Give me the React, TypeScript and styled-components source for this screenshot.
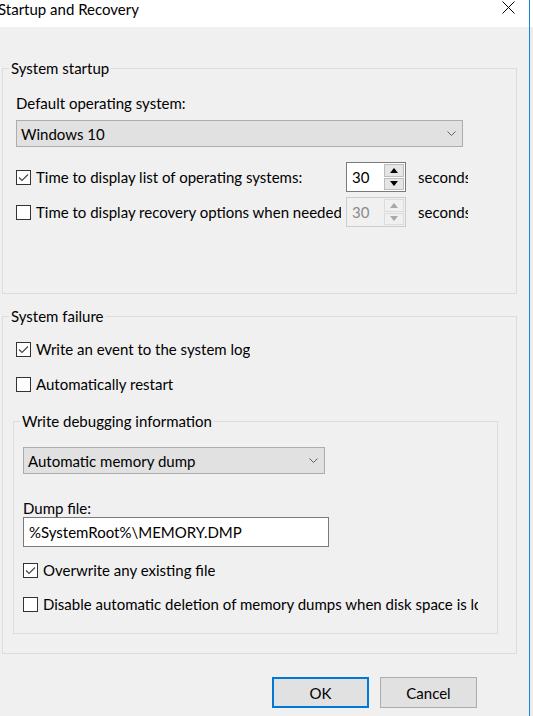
import React from "react";
import styled, { createGlobalStyle } from "styled-components";

const GlobalStyle = createGlobalStyle`
  html, body {
    margin: 0;
    padding: 0;
  }
  body {
    width: 533px;
    height: 716px;
    overflow: hidden;
    background: linear-gradient(#ffffff 27px, #ececec 27px);
    font-family: Lato, "Noto Sans", sans-serif;
    font-size: 15px;
    color: #000;
  }
`;

const Window = styled.div`
  width: 530px;
  height: 716px;
  box-sizing: border-box;
  border-right: 1px solid #1883d7;
  display: flex;
  flex-direction: column;
  background: #f0f0f0;
`;

const TitleBar = styled.div`
  height: 27px;
  flex-shrink: 0;
  background: #fff;
  display: flex;
  align-items: center;
  justify-content: space-between;
  padding-right: 14px;
`;

const Title = styled.span`
  margin-left: -2px;
  margin-top: -10px;
  font-size: 15px;
`;

const CloseIcon = styled.svg`
  margin-top: -12px;
`;

const Body = styled.div`
  flex: 1;
  padding: 32px 12px 0 2px;
  display: flex;
  flex-direction: column;
`;

const GroupBox = styled.fieldset<{ $width: number; $height: number; $padLeft: number; $padTop: number }>`
  margin: 0;
  box-sizing: border-box;
  width: ${(p) => p.$width}px;
  height: ${(p) => p.$height}px;
  min-inline-size: 0;
  border: 1px solid #dcdcdc;
  padding: ${(p) => p.$padTop}px 0 0 ${(p) => p.$padLeft}px;
  display: flex;
  flex-direction: column;
  align-items: flex-start;
`;

// the legend sits after the fieldset's left padding, so pull it back to 6px from the border
const Legend = styled.legend<{ $padLeft: number }>`
  padding: 0 2px;
  margin-left: ${(p) => 6 - p.$padLeft}px;
  line-height: 18px;
`;

const FieldLabel = styled.div<{ $gap?: number }>`
  line-height: 18px;
  margin-top: ${(p) => p.$gap ?? 0}px;
  white-space: nowrap;
`;

const Combo = styled.div<{ $width: number; $gap: number }>`
  width: ${(p) => p.$width}px;
  height: 27px;
  margin-top: ${(p) => p.$gap}px;
  box-sizing: border-box;
  background: #e1e1e1;
  border: 1px solid #adadad;
  display: flex;
  align-items: center;
  justify-content: space-between;
  padding: 0 6px 0 4px;
`;

const SpinRow = styled.div<{ $gap: number }>`
  display: flex;
  align-items: center;
  margin-top: ${(p) => p.$gap}px;
`;

const CheckRow = styled.div<{ $width?: number; $gap?: number }>`
  display: flex;
  align-items: center;
  gap: 5px;
  height: 18px;
  margin-top: ${(p) => p.$gap ?? 0}px;
  width: ${(p) => (p.$width ? `${p.$width}px` : "auto")};
  overflow: hidden;
  white-space: nowrap;
  flex-shrink: 0;
`;

const Box = styled.span`
  width: 15px;
  height: 15px;
  flex-shrink: 0;
  box-sizing: border-box;
  border: 1px solid #333;
  background: #fff;
  display: flex;
  align-items: center;
  justify-content: center;
`;

const Spinner = styled.div<{ $disabled?: boolean }>`
  width: 60px;
  height: 30px;
  margin-left: 5px;
  box-sizing: border-box;
  border: 1px solid ${(p) => (p.$disabled ? "#cccccc" : "#7a7a7a")};
  background: ${(p) => (p.$disabled ? "#f0f0f0" : "#fff")};
  color: ${(p) => (p.$disabled ? "#8a8a8a" : "#000")};
  display: flex;
  align-items: center;
  justify-content: space-between;
  padding: 1px 1px 1px 5px;
`;

const SpinButtons = styled.div`
  width: 20px;
  height: 26px;
  display: flex;
  flex-direction: column;
  gap: 1px;
`;

const SpinButton = styled.span<{ $disabled?: boolean }>`
  flex: 1;
  box-sizing: border-box;
  border: 1px solid ${(p) => (p.$disabled ? "#dcdcdc" : "#bcbcbc")};
  background: ${(p) => (p.$disabled ? "#f0f0f0" : "#e5e5e5")};
  display: flex;
  align-items: center;
  justify-content: center;
`;

const Seconds = styled.span`
  width: 50px;
  margin-left: 12px;
  overflow: hidden;
  white-space: nowrap;
`;

const Stack = styled.div`
  display: flex;
  flex-direction: column;
  padding-left: 3px;
`;

const TextInput = styled.div`
  width: 306px;
  height: 30px;
  box-sizing: border-box;
  background: #fff;
  border: 1px solid #7a7a7a;
  display: flex;
  align-items: center;
  padding-left: 5px;
  white-space: nowrap;
`;

const ButtonRow = styled.div`
  display: flex;
  justify-content: flex-end;
  gap: 11px;
  margin-top: 23px;
  padding-right: 40px;
`;

const Button = styled.div<{ $primary?: boolean }>`
  width: 97px;
  height: 31px;
  box-sizing: border-box;
  background: #e1e1e1;
  border: ${(p) => (p.$primary ? "2px solid #0078d7" : "1px solid #adadad")};
  display: flex;
  align-items: center;
  justify-content: center;
`;

const Chevron = () => (
  <svg width="9" height="5" viewBox="0 0 9 5">
    <polyline points="0.5,0.5 4.5,4.5 8.5,0.5" fill="none" stroke="#606060" strokeWidth="1" />
  </svg>
);

const Check: React.FC<{ checked?: boolean; label: string; width?: number; gap?: number }> = ({
  checked,
  label,
  width,
  gap,
}) => (
  <CheckRow $width={width} $gap={gap}>
    <Box>
      {checked && (
        <svg width="11" height="9" viewBox="0 0 11 9">
          <polyline points="1,4.5 4,7.5 10,1.5" fill="none" stroke="#444" strokeWidth="1.1" />
        </svg>
      )}
    </Box>
    <span>{label}</span>
  </CheckRow>
);

const Arrow: React.FC<{ up?: boolean; color: string }> = ({ up, color }) => (
  <svg width="8" height="5" viewBox="0 0 8 5">
    <polygon points={up ? "0,5 8,5 4,0" : "0,0 8,0 4,5"} fill={color} />
  </svg>
);

const Spin: React.FC<{ value: string; disabled?: boolean }> = ({ value, disabled }) => (
  <Spinner $disabled={disabled}>
    <span>{value}</span>
    <SpinButtons>
      <SpinButton $disabled={disabled}>
        <Arrow up color={disabled ? "#a8a8a8" : "#000"} />
      </SpinButton>
      <SpinButton $disabled={disabled}>
        <Arrow color={disabled ? "#a8a8a8" : "#000"} />
      </SpinButton>
    </SpinButtons>
  </Spinner>
);

const App: React.FC = () => {
  return (
    <Window>
      <GlobalStyle />
      <TitleBar>
        <Title>Startup and Recovery</Title>
        <CloseIcon width="13" height="13" viewBox="0 0 13 13">
          <path d="M0.5 0.5 L12.5 12.5 M12.5 0.5 L0.5 12.5" stroke="#000" strokeWidth="1" />
        </CloseIcon>
      </TitleBar>
      <Body>
        <GroupBox $width={515} $height={235} $padLeft={13} $padTop={17}>
          <Legend $padLeft={13}>System startup</Legend>
          <FieldLabel>Default operating system:</FieldLabel>
          <Combo $width={447} $gap={8}>
            <span>Windows 10</span>
            <Chevron />
          </Combo>
          <SpinRow $gap={15}>
            <Check checked label="Time to display list of operating systems:" width={325} />
            <Spin value="30" />
            <Seconds>seconds</Seconds>
          </SpinRow>
          <SpinRow $gap={5}>
            <Check label="Time to display recovery options when needed:" width={325} />
            <Spin value="30" disabled />
            <Seconds>seconds</Seconds>
          </SpinRow>
        </GroupBox>

        <div style={{ height: 13 }} />

        <GroupBox $width={515} $height={347} $padLeft={10} $padTop={15}>
          <Legend $padLeft={10}>System failure</Legend>
          <Stack>
            <Check checked label="Write an event to the system log" />
            <Check label="Automatically restart" gap={17} />
          </Stack>
          <div style={{ height: 19 }} />
          <GroupBox $width={485} $height={222} $padLeft={9} $padTop={17}>
            <Legend $padLeft={9}>Write debugging information</Legend>
            <Combo $width={302} $gap={0}>
              <span>Automatic memory dump</span>
              <Chevron />
            </Combo>
            <FieldLabel $gap={25}>Dump file:</FieldLabel>
            <TextInput>%SystemRoot%\MEMORY.DMP</TextInput>
            <Check checked label="Overwrite any existing file" gap={14} />
            <Check
              label="Disable automatic deletion of memory dumps when disk space is low"
              width={455}
              gap={16}
            />
          </GroupBox>
        </GroupBox>

        <ButtonRow>
          <Button $primary>OK</Button>
          <Button>Cancel</Button>
        </ButtonRow>
      </Body>
    </Window>
  );
};

export default App;
